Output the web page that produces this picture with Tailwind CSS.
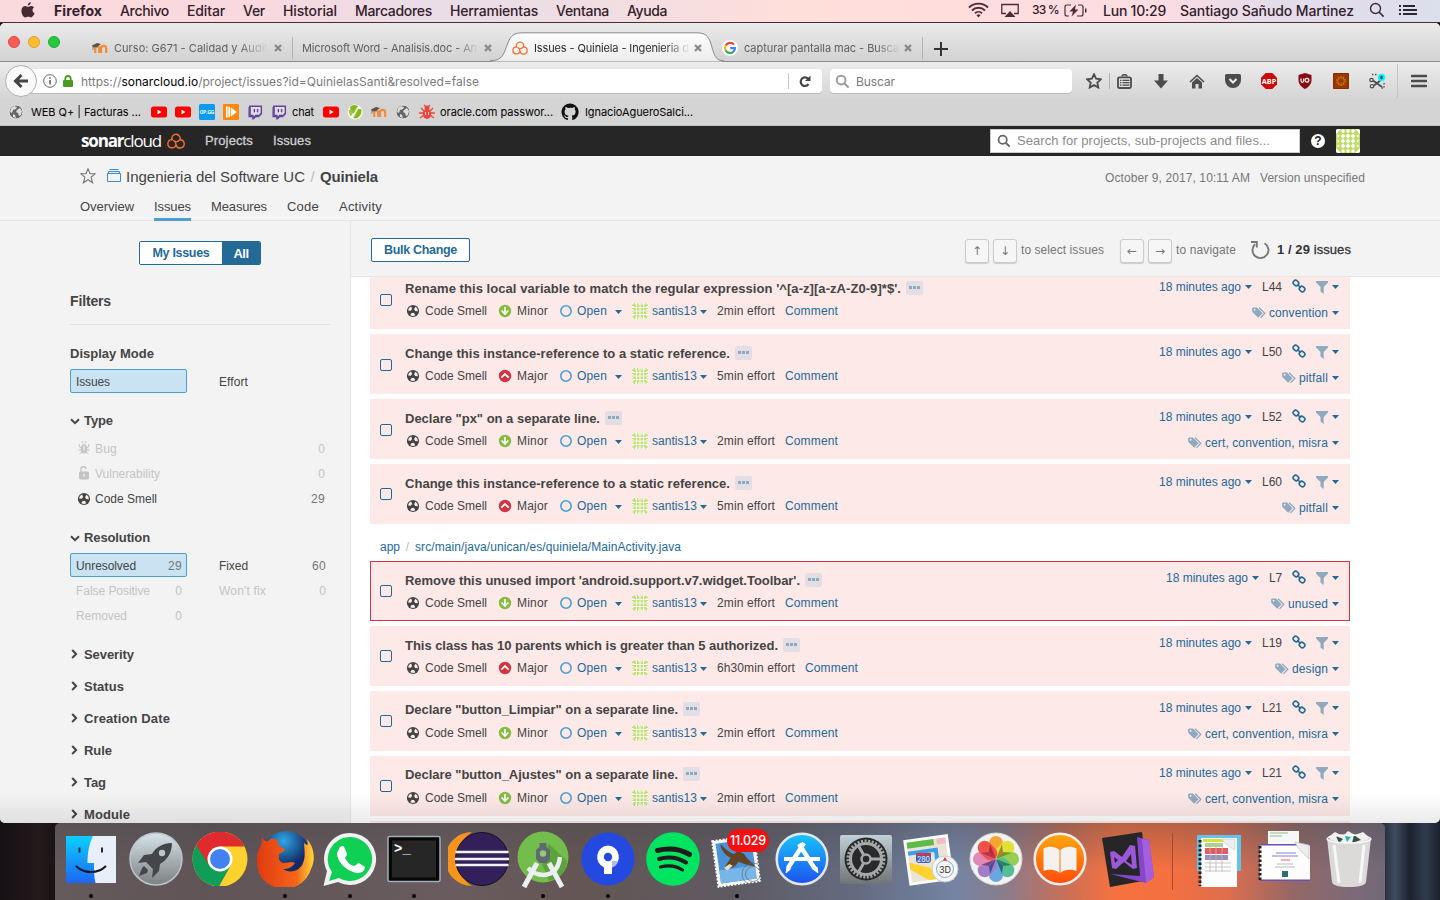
<!DOCTYPE html>
<html lang="es">
<head>
<meta charset="utf-8">
<title>Issues - Quiniela - Ingenieria del Software UC</title>
<script src="https://cdn.jsdelivr.net/npm/@tailwindcss/browser@4"></script>
</head>
<body class="bg-[#17151a]">
<svg width="0" height="0" class="absolute">
  <defs>
    <symbol id="close" viewBox="0 0 10 10"><path d="M2 2l6 6M8 2l-6 6" stroke="#8b8b8b" stroke-width="2.4"/></symbol>
    <symbol id="moodle" viewBox="0 0 16 12"><path d="M3.2 11V6.6a2 2 0 0 1 4 0V11M8.200 11V6.600a2.600 2.600 0 0 1 2-1.600M9 11V6.500a2.600 2.600 0 0 1 5.200 0V11" fill="none" stroke="#f08c3c" stroke-width="2.200"/><path d="M0 3.500L5 1l4 1-4 3-4 .4z" fill="#555"/><path d="M1 4v4" stroke="#777" stroke-width=".8"/></symbol>
    <symbol id="sonar" viewBox="0 0 18 16"><g fill="none" stroke-width="1.400" stroke-linecap="round"><path d="M5 6.700A4.200 4.200 0 1 1 13 6.800"/><path d="M5.200 6.600A4.100 4.100 0 1 0 9 11.600C8.900 9.500 8 8.200 6.700 7.600"/><path d="M9.200 12.200A4.100 4.100 0 1 0 13 6.800C11.300 8.700 9.800 9 8.300 8.500"/></g></symbol>
    <symbol id="yt" viewBox="0 0 16 12"><rect y=".5" width="16" height="11" rx="2.500" fill="#f00"/><path d="M6.500 3.500v5l4-2.500z" fill="#fff"/></symbol>
    <symbol id="twitch" viewBox="0 0 16 16"><path d="M1.500 1H15v9l-3.500 3.500H8.500L6 16H4.500v-2.500H.5V3.500z" fill="#6441a5"/><path d="M3 2.700h10.500V9l-2 2H8l-2 1.800V11H3z" fill="#ddd"/><path d="M6.800 4.700v3.500M10.200 4.700v3.500" stroke="#6441a5" stroke-width="1.500"/></symbol>
    <symbol id="globe" viewBox="0 0 16 16"><circle cx="8" cy="8" r="7" fill="#666" stroke="#e9e9e9" stroke-width="1"/><path d="M3 4l3-2 3 1-1 2-3 1-1 3-2-1zM9 6l3-2 2 3-1 4-2 1-1-3-2-1zM5 10l2 1 1 3-3-1z" fill="#ddd"/></symbol>
    <symbol id="mag" viewBox="0 0 16 16"><circle cx="6.500" cy="6.500" r="4.700" fill="none" stroke-width="2"/><path d="M10 10l4.500 4.500" stroke-width="2.200"/></symbol>
    <symbol id="smell" viewBox="0 0 14 14"><circle cx="7" cy="7" r="6.100" fill="#444"/><circle cx="7" cy="7" r="3.450" fill="none" stroke="#fdeeed" stroke-width="2.900" stroke-dasharray="3.613 3.613" transform="rotate(-60 7 7)"/></symbol>
    <symbol id="minor" viewBox="0 0 14 14"><circle cx="7" cy="7" r="6.200" fill="#85bb43"/><path d="M7 3v6.500M3.600 6.500L7 10l3.400-3.500" fill="none" stroke="#fff" stroke-width="1.700"/></symbol>
    <symbol id="major" viewBox="0 0 14 14"><circle cx="7" cy="7" r="6.200" fill="#d4333f"/><path d="M3.300 8.600L7 5l3.700 3.600" fill="none" stroke="#fff" stroke-width="1.800"/></symbol>
    <symbol id="avatar" viewBox="0 0 24 24"><path fill="#c0da66" d="M0 0h24v24H0z"/><g fill="#fff"><path d="M0 0h5L0 5zM24 0h-5l5 5zM0 24h5l-5-5zM24 24h-5l5-5z"/><circle cx="7" cy="2" r="1.700"/><circle cx="12" cy="2" r="1.700"/><circle cx="17" cy="2" r="1.700"/><circle cx="7" cy="22" r="1.700"/><circle cx="12" cy="22" r="1.700"/><circle cx="17" cy="22" r="1.700"/><path d="M1.500 5l2 2-2 2zM1.500 10l2 2-2 2zM1.500 15l2 2-2 2zM22.500 5l-2 2 2 2zM22.500 10l-2 2 2 2zM22.500 15l-2 2 2 2z"/><path d="M7 4.600l2.400 2.400L7 9.400 4.600 7zM12 4.600l2.400 2.400-2.400 2.400L9.600 7zM17 4.600l2.400 2.400-2.400 2.400L14.600 7zM7 9.600l2.400 2.400L7 14.400 4.600 12zM12 9.600l2.400 2.400-2.400 2.400L9.600 12zM17 9.600l2.400 2.400-2.400 2.400-2.400-2.400zM7 14.600l2.400 2.400L7 19.400 4.600 17zM12 14.600l2.400 2.400-2.400 2.400L9.600 17zM17 14.600l2.400 2.400-2.400 2.400-2.400-2.400z"/></g></symbol>
    <symbol id="avatar-sm" viewBox="0 0 16 16"><path fill="#c3dc74" d="M0 0h16v16H0z"/><path d="M0 .8h16M0 15.200h16M.8 0v16M15.200 0v16" stroke="#fff" stroke-width="1.300" stroke-dasharray="1.500 1.500"/><path d="M4.500 0v16M8 0v16M11.500 0v16M0 4.500h16M0 8h16M0 11.500h16" stroke="#fff" stroke-width="1.100" opacity=".9"/></symbol>
    <symbol id="caret" viewBox="0 0 7 4"><path d="M0 0h7L3.500 4z" fill="#236a97"/></symbol>
    <symbol id="link" viewBox="0 0 14 14"><g fill="none" stroke="#236a97" stroke-width="1.600"><rect x="1.100" y="1.600" width="5.600" height="4.800" rx="2.200" transform="rotate(42 4 4)"/><rect x="7.300" y="7.600" width="5.600" height="4.800" rx="2.200" transform="rotate(42 10 10)"/><path d="M5.300 5.300l3.400 3.400"/></g></symbol>
    <symbol id="filter" viewBox="0 0 12 13"><path d="M0 0h12v1.500L7.700 6v7L4.500 10.500V6L0 1.500z" fill="#8fa9bf"/></symbol>
    <symbol id="tags" viewBox="0 0 14 12"><path d="M0 1.500L1 .5h4l5.500 5.700-4.300 4.500L.3 5z" fill="#8fa9bf"/><path d="M7 .7l5.800 5.600-4.300 4.600" fill="none" stroke="#8fa9bf" stroke-width="1.300"/><circle cx="2.600" cy="2.800" r="1" fill="#fde9e8"/></symbol>
    <symbol id="down" viewBox="0 0 10 7"><path d="M1 1.200l4 3.900 4-3.900" fill="none" stroke="#444" stroke-width="2"/></symbol>
    <symbol id="right" viewBox="0 0 7 10"><path d="M1.200 1l3.900 4-3.900 4" fill="none" stroke="#444" stroke-width="2"/></symbol>
  </defs>
</svg>

<div class="w-[1440px] h-[900px] overflow-hidden flex flex-col font-['Liberation_Sans',Arial,sans-serif] text-[#444] whitespace-nowrap">

  <!-- System menu bar -->
  <header class="h-[23px] shrink-0 flex items-center pb-[1.500px] text-[14px] font-medium text-[#33202a] font-['Inter',sans-serif] border-b border-[#4b2c36] bg-[linear-gradient(90deg,#fbdadd_0,#f9d9de_240px,#eadde8_430px,#eedde4_560px,#ffdfda_800px,#ffdddd_960px,#fcdde3_1160px,#e6dcea_1260px,#dcdfed_1440px)]">
    <svg class="ml-[21px] mr-[19px]" width="14" height="16" viewBox="0 0 14 16"><path fill="#452a30" d="M9.800.3c.1 1.700-1.300 3.200-3 3.200C6.600 1.900 8.200.4 9.800.3zM7.100 4.700c.8 0 1.600-.8 3-.8 1.300 0 2.400.7 3 1.600-2.300 1.400-2 4.600.5 5.600-.6 1.700-2 4.300-3.500 4.300-1 0-1.600-.7-2.900-.7s-1.900.7-2.800.7C2.700 15.400.4 12 .4 8.900c0-3.300 2-5 3.900-5 1.200 0 2.100.8 2.800.8z"/></svg>
    <nav class="flex">
      <span class="w-[66px] font-bold"><i data-w="48">Firefox</i></span><span class="w-[67px]"><i data-w="49">Archivo</i></span><span class="w-[56px]"><i data-w="38">Editar</i></span><span class="w-[40px]"><i data-w="22">Ver</i></span><span class="w-[72px]"><i data-w="54">Historial</i></span><span class="w-[95px]"><i data-w="77">Marcadores</i></span><span class="w-[106px]"><i data-w="88">Herramientas</i></span><span class="w-[71px]"><i data-w="53">Ventana</i></span><span class="w-[341px]"><i data-w="40">Ayuda</i></span>
    </nav>
    <div class="flex items-center">
      <svg class="mr-[12px]" width="21" height="16" viewBox="0 0 21 16"><g fill="none" stroke="#4a2e33" stroke-width="1.900"><path d="M1 5.500a13.500 13.500 0 0 1 19 0M4 8.500a9.200 9.200 0 0 1 13 0M7 11.300a5 5 0 0 1 7 0"/></g><path d="M8.500 13.200a3 3 0 0 1 4 0L10.500 15.400z" fill="#4a2e33"/></svg>
      <svg class="mr-[13px]" width="18" height="15" viewBox="0 0 18 15"><path d="M5 10.500H.8V1.500h16.400v9H13" fill="none" stroke="#4a2e33" stroke-width="1.300"/><path d="M9 8l5.500 6h-11z" fill="#4a2e33"/></svg>
      <span class="w-[32px] text-[12px]"><i data-w="27">33 %</i></span>
      <svg class="mr-[16px]" width="23" height="13" viewBox="0 0 23 13"><path d="M7 1H3Q1 1 1 3v7q0 2 2 2h2M14 1h3q2 0 2 2v7q0 2-2 2h-4" fill="none" stroke="#4a2e33" stroke-width="1.200"/><path d="M12 .5L5.500 7.500H9L7.500 12.500 14.500 5.500H11z" fill="#4a2e33"/><path d="M21 4.500h1.500v4H21z" fill="#4a2e33"/></svg>
      <span class="w-[77px]"><i data-w="63">Lun 10:29</i></span>
      <span class="w-[189px]"><i data-w="174">Santiago Sañudo Martinez</i></span>
      <svg width="16" height="16" viewBox="0 0 16 16" class="mr-[14px]"><circle cx="6.500" cy="6.500" r="5" fill="none" stroke="#3a2c38" stroke-width="1.400"/><path d="M10 10l4.600 4.600" stroke="#3a2c38" stroke-width="1.700"/></svg>
      <svg width="19" height="12" viewBox="0 0 19 12"><path d="M0 2h2M4 2h12M0 6h2M4 6h14M0 10h2M4 10h14" stroke="#2d2633" stroke-width="1.800"/></svg>
    </div>
  </header>

  <!-- Browser window -->
  <div class="relative h-[800px] shrink-0 flex flex-col rounded-[5px] overflow-hidden bg-white">
    <div class="h-[39px] shrink-0 flex items-start bg-linear-to-b from-[#ebebeb] to-[#d2d2d2] border-b border-[#8c8a8c] text-[11px] text-[#5f5f5f] font-['Inter',sans-serif]">
      <div class="flex gap-[8px] pl-[8px] pt-[13px] w-[92px]">
        <b class="w-3 h-3 rounded-full bg-[#fc5b57] border border-[#df4744]"></b><b class="w-3 h-3 rounded-full bg-[#fdbc2f] border border-[#dfa023]"></b><b class="w-3 h-3 rounded-full bg-[#28c840] border border-[#1fab2e]"></b>
      </div>
      <div class="w-[201px] h-[22px] mt-[14px] flex items-center border-r border-[#b2b2b2]">
        <svg width="16" height="12" class="mr-[6px]"><use href="#moodle"/></svg>
        <span class="w-[156px] overflow-hidden mask-r-from-[125px] mask-r-to-[154px]"><i data-w="154">Curso: G671 - Calidad y Audit</i></span>
        <svg width="10" height="10" class="ml-[3px]"><use href="#close"/></svg>
      </div>
      <div class="w-[200px] h-[22px] mt-[14px] flex items-center pl-[9px]">
        <span class="w-[177px] overflow-hidden mask-r-from-[155px] mask-r-to-[177px]"><i data-w="175">Microsoft Word - Analisis.doc - An</i></span>
        <svg width="10" height="10" class="ml-[4px]"><use href="#close"/></svg>
      </div>
      <div class="w-[229px] h-[39px] relative">
        <svg class="absolute left-[-3px] top-[9px]" width="234" height="30" viewBox="0 0 234 30"><defs><linearGradient id="tg" x2="0" y2="1"><stop stop-color="#fdfdfd"/><stop offset="1" stop-color="#ececec"/></linearGradient></defs><path d="M0 29.500C13 29 14 21 17.500 12 20.500 3.500 24 .8 33 .8H206c9 0 12.500 2.700 15 11.200C224 22 225 29 234 29.500z" fill="url(#tg)"/><path d="M0 28.800C13 29 14 21 17.500 12 20.500 3.500 24 .8 33 .8H206c9 0 12.500 2.700 15 11.200C224 22 225 29 234 28.800" fill="none" stroke="#8c8a8c"/></svg>
        <div class="relative flex items-center h-[22px] mt-[14px] pl-[19px] text-[#2a2a2a]">
          <svg width="16" height="14" class="mr-[6px] stroke-[#f3702a]"><use href="#sonar"/></svg>
          <span class="w-[156px] overflow-hidden mask-r-from-[130px] mask-r-to-[156px]"><i data-w="155">Issues - Quiniela - Ingenieria d</i></span>
          <svg width="10" height="10" class="ml-[3px]"><use href="#close"/></svg>
        </div>
      </div>
      <div class="w-[201px] h-[22px] mt-[14px] flex items-center border-r border-[#b2b2b2]">
        <svg width="16" height="16" viewBox="0 0 16 16" class="mr-[6px]"><circle cx="8" cy="8" r="8" fill="#fff"/><g fill="none" stroke-width="2.200"><path d="M12 4.600A5 5 0 0 0 3.700 5.600" stroke="#ea4335"/><path d="M3.700 5.400a5 5 0 0 0 0 5" stroke="#fbbc05"/><path d="M3.600 10.200a5 5 0 0 0 7.800 1.500" stroke="#34a853"/><path d="M11.300 11.800A5 5 0 0 0 13 8.100H8.200" stroke="#4285f4"/></g></svg>
        <span class="w-[156px] overflow-hidden mask-r-from-[132px] mask-r-to-[156px]"><i data-w="155">capturar pantalla mac - Busca</i></span>
        <svg width="10" height="10" class="ml-[3px]"><use href="#close"/></svg>
      </div>
      <svg class="ml-[11px] mt-[19px]" width="14" height="14"><path d="M7 0v14M0 7h14" stroke="#333" stroke-width="2"/></svg>
    </div>

    <div class="h-[38px] shrink-0 flex items-center bg-linear-to-b from-[#ececec] to-[#d4d4d4] text-[12px] font-['Inter',sans-serif] text-[#7b7b7b]">
      <div class="w-[32px] h-[32px] ml-[5px] shrink-0 rounded-full border border-[#b0b0b0] bg-[#fafafa] flex items-center justify-center z-10"><svg width="16" height="16" viewBox="0 0 16 16"><path d="M15 8H4M8.500 2L2.500 8l6 6" fill="none" stroke="#444" stroke-width="3"/></svg></div>
      <div class="w-[801px] h-[24px] -ml-[16px] pl-[22px] bg-white rounded-r-[4px] shadow-[0_1px_0_#bdbdbd] flex items-center">
        <svg width="14" height="14" viewBox="0 0 14 14" class="mr-[6px]"><circle cx="7" cy="7" r="6.300" fill="none" stroke="#666"/><path d="M7 6v4.500M7 3.300v1.500" stroke="#555" stroke-width="1.500"/></svg>
        <svg width="10" height="12" viewBox="0 0 10 12" class="mr-[8px]"><path d="M2.300 6V3.700a2.700 2.700 0 0 1 5.400 0V6" fill="none" stroke="#4a9b20" stroke-width="1.800"/><rect y="5" width="10" height="7" rx="1" fill="#4a9b20"/></svg>
        <span class="w-[707px] pt-[2px]"><i data-w="398">https://<b class="font-normal text-black">sonarcloud.io</b>/project/issues?id=QuinielasSanti&amp;resolved=false</i></span>
        <span class="h-4 border-l border-[#c8c8c8] mr-[10px]"></span>
        <svg width="12" height="13" viewBox="0 0 12 13"><path d="M9.500 9.200A4.300 4.300 0 1 1 9 3.600" fill="none" stroke="#444" stroke-width="2.200"/><path d="M11.500.5v5.500H6z" fill="#444"/></svg>
      </div>
      <div class="w-[242px] h-[24px] ml-[8px] mr-[14px] pl-[5px] bg-white rounded-[4px] shadow-[0_1px_0_#bdbdbd] flex items-center">
        <svg width="15" height="15" viewBox="0 0 16 16" class="mr-[6px] stroke-[#9a9a9a] fill-none"><use href="#mag"/></svg><span class="pt-[2px]"><i data-w="39">Buscar</i></span>
      </div>
      <div class="flex items-center h-full">
        <svg width="16" height="16" viewBox="0 0 16 16" class="mr-[7px]"><path d="M8 1.200l2.100 4.500 4.800.6-3.600 3.300 1 4.900L8 12.100l-4.300 2.400 1-4.900L1.100 6.300l4.800-.6z" fill="none" stroke="#4c4c4c" stroke-width="1.800"/></svg>
        <span class="h-4 border-l border-[#b2b2b2] mr-[7px]"></span>
        <svg width="15" height="15" viewBox="0 0 15 15" class="mr-[21px]"><path d="M5 2.500Q5 .7 7.500.7T10 2.500" fill="none" stroke="#4c4c4c" stroke-width="1.500"/><rect x="1" y="3.300" width="13" height="10.700" rx="1.500" fill="none" stroke="#4c4c4c" stroke-width="1.800"/><path d="M3 6.300h1.500M5.500 6.300h7M3 8.700h1.500M5.500 8.700h7M3 11.100h1.500M5.500 11.100h7" stroke="#4c4c4c" stroke-width="1.200"/></svg>
        <svg width="16" height="15" viewBox="0 0 16 15" class="mr-[20px]"><path d="M5.500 0h5v6.500H15L8 14.500 1 6.500h4.500z" fill="#4c4c4c"/></svg>
        <svg width="16" height="15" viewBox="0 0 16 15" class="mr-[20px]"><path d="M1 8l7-6.500L15 8" fill="none" stroke="#4c4c4c" stroke-width="1.600"/><path d="M3 8.500L8 4l5 4.500V14.500H9.500V10h-3v4.500H3z" fill="#4c4c4c"/></svg>
        <svg width="16" height="14" viewBox="0 0 16 14" class="mr-[20px]"><path d="M1.500 0h13Q16 0 16 1.500V6a8 8 0 0 1-16 0V1.500Q0 0 1.500 0z" fill="#4c4c4c"/><path d="M4.500 5L8 8.500 11.500 5" fill="none" stroke="#eee" stroke-width="2"/></svg>
        <svg width="16" height="16" viewBox="0 0 16 16" class="mr-[20px]"><path d="M4.700 0h6.600L16 4.700v6.600L11.300 16H4.700L0 11.300V4.700z" fill="#cc0a0a"/><text x="8" y="10.700" text-anchor="middle" font-size="7.300" font-weight="bold" font-family="Open Sans" fill="#fff">ABP</text></svg>
        <svg width="16" height="16" viewBox="0 0 16 16" class="mr-[20px]"><path d="M8 0l6.500 2v5c0 4-2.500 7-6.500 9-4-2-6.500-5-6.500-9V2z" fill="#8b0a10"/><path d="M4 5.500v2.300q0 1.500 1.300 1.500T6.700 7.800V5.500" fill="none" stroke="#fff" stroke-width="1.200"/><circle cx="10" cy="7.300" r="1.900" fill="none" stroke="#fff" stroke-width="1.200"/></svg>
        <svg width="16" height="16" viewBox="0 0 16 16" class="mr-[20px]"><path d="M.5.500h15v15H.5z" fill="#9a3600" stroke="#832c00"/><circle cx="8" cy="8" r="4.300" fill="none" stroke="#c98318" stroke-width="1.200" stroke-dasharray="1.500 1.200"/><circle cx="8" cy="8" r="3.200" fill="none" stroke="#c98318" stroke-width=".8"/></svg>
        <svg width="17" height="16" viewBox="0 0 17 16" class="mr-[11px]"><path d="M3 1.500h6M15 10v5H11" fill="none" stroke="#4c4c4c" stroke-width="1.300" stroke-dasharray="1.500 1.500"/><path d="M4 7.500l9 6.500M5 12.500l7-5.500" stroke="#4c4c4c" stroke-width="1.700"/><circle cx="2.500" cy="7" r="1.700" fill="none" stroke="#4c4c4c" stroke-width="1.200"/><circle cx="3" cy="13.200" r="1.700" fill="none" stroke="#4c4c4c" stroke-width="1.200"/><circle cx="12.500" cy="4.500" r="3.700" fill="#0ff"/><path d="M12.500 2.500v4M10.800 3.500l3.400 2M14.200 3.500l-3.400 2" stroke="#156" stroke-width="1"/></svg>
        <span class="h-[34px] border-l border-[#c4c4c4] mr-[13px]"></span>
        <svg width="16" height="14" viewBox="0 0 16 14"><path d="M1 2h14M1 7h14M1 12h14" stroke="#4c4c4c" stroke-width="2.600" stroke-linecap="round"/></svg>
      </div>
    </div>

    <div class="h-[26px] shrink-0 pl-[8px] flex items-center bg-[#d4d4d4] border-b border-[#bcc3c3] text-[11px] text-black font-['Inter',sans-serif]">
      <svg width="16" height="16" class="mr-[7px] -mt-[2px]"><use href="#globe"/></svg><span class="w-[120px] -mt-px"><i data-w="110">WEB Q+ | Facturas ...</i></span>
      <svg width="16" height="12" class="mr-[8px] -mt-[2px]"><use href="#yt"/></svg>
      <svg width="16" height="12" class="mr-[8px] -mt-[2px]"><use href="#yt"/></svg>
      <svg width="16" height="16" viewBox="0 0 16 16" class="mr-[8px] -mt-[2px]"><rect width="16" height="16" rx="1.500" fill="#0a9bf0"/><text x="8" y="10" text-anchor="middle" font-size="4.600" font-weight="bold" font-family="Inter" fill="#fff">OP.GG</text></svg>
      <svg width="16" height="16" viewBox="0 0 16 16" class="mr-[9px] -mt-[2px]"><rect width="16" height="16" rx="1" fill="#f98a0b"/><path d="M3 2.500v11h1.600v-11zM5.400 2.700v10.600l1.700-.6V3.300zM7.900 3.600v8.800l6-4.400z" fill="#fff"/></svg>
      <svg width="15" height="16" class="mr-[9px] -mt-[2px]"><use href="#twitch"/></svg>
      <svg width="15" height="16" class="mr-[5px] -mt-[2px]"><use href="#twitch"/></svg><span class="w-[31px] -mt-px"><i data-w="22">chat</i></span>
      <svg width="16" height="12" class="mr-[8px] -mt-[2px]"><use href="#yt"/></svg>
      <svg width="16" height="16" viewBox="0 0 16 16" class="mr-[8px] -mt-[2px]"><circle cx="8" cy="8" r="7.500" fill="#fff"/><path d="M3 3a7 7 0 0 1 8-1L8 7l-1 2-3 .500zM11 5l3 0a7 7 0 0 1-6 9.500L6 14l2-3z" fill="#85b917"/><path d="M1.500 6L3 12l2-1 1-5z" fill="#9ac832"/></svg>
      <svg width="16" height="12" class="mr-[8px] -mt-[2px]"><use href="#moodle"/></svg>
      <svg width="16" height="16" class="mr-[8px] -mt-[2px]"><use href="#globe"/></svg>
      <svg width="16" height="16" viewBox="0 0 16 16" class="mr-[5px] -mt-[2px]"><g stroke="#f0433a" stroke-width="1.300" fill="none"><path d="M0 9h16M2 4l3 3M14 4l-3 3M1 14l4-3M15 14l-4-3M5 1l2 2M11 1L9 3"/></g><ellipse cx="8" cy="10" rx="4.200" ry="5" fill="#f0433a"/><circle cx="8" cy="4" r="2.500" fill="#f0433a"/><path d="M6.500 8v3M9.500 8v3" stroke="#d4d4d4"/></svg><span class="w-[121px] -mt-px"><i data-w="113">oracle.com passwor...</i></span>
      <svg width="18" height="18" viewBox="0 0 16 16" class="mr-[6px] -mt-[2px]"><path fill="#111" d="M8 0.400a7.600 7.600 0 0 0-2.400 14.800c.4.100.5-.2.500-.4v-1.400c-2.100.5-2.600-.9-2.600-.9-.3-.9-.8-1.100-.8-1.100-.7-.5.100-.5.100-.5.800.1 1.200.8 1.200.8.700 1.200 1.800.8 2.200.6.100-.5.300-.8.500-1-1.700-.2-3.500-.8-3.500-3.700 0-.8.300-1.500.8-2-.1-.200-.4-1 .1-2 0 0 .6-.2 2.100.8a7 7 0 0 1 3.800 0c1.500-1 2.100-.8 2.100-.8.400 1 .2 1.800.1 2 .5.500.8 1.200.8 2 0 2.900-1.800 3.500-3.500 3.700.3.200.5.700.5 1.400v2.100c0 .2.100.5.500.4A7.600 7.600 0 0 0 8 .4z"/></svg><span class="-mt-px"><i data-w="108">IgnacioAgueroSalci...</i></span>
    </div>

    <!-- SonarCloud -->
    <div class="h-[30px] shrink-0 pl-[81px] flex items-center bg-[#262626] text-[13px] text-[#cfcfcf]">
      <span class="w-[86px] text-[17px] leading-none text-white font-['Open_Sans',sans-serif] -mt-[2px]"><i data-w="80"><b class="font-bold">sonar</b>cloud</i></span>
      <svg width="18" height="16" class="mr-[20px] stroke-[#f3702a]"><use href="#sonar"/></svg>
      <span class="w-[68px] [-webkit-text-stroke:0.3px]"><i data-w="48">Projects</i></span><span class="w-[717px] [-webkit-text-stroke:0.3px]"><i data-w="38">Issues</i></span>
      <div class="w-[310px] h-[24px] bg-white border border-[#cdcdcd] pl-[6px] flex items-center text-[#8b8b8b]"><svg width="14" height="14" viewBox="0 0 16 16" class="mr-[6px] stroke-[#666] fill-none"><use href="#mag"/></svg><i data-w="253">Search for projects, sub-projects and files...</i></div>
      <span class="ml-[11px] mr-[11px] w-[14px] h-[14px] rounded-full bg-white text-[#222] text-[12px] leading-[14px] font-bold text-center">?</span>
      <svg width="24" height="24" class="rounded-[2px]"><use href="#avatar"/></svg>
    </div>

    <div class="h-[65px] shrink-0 pl-[80px] bg-[#f3f3f3] border-b border-[#e6e6e6]">
      <div class="h-[34px] pt-[9px] flex items-center text-[15px]">
        <svg width="16" height="16" viewBox="0 0 16 16" class="mr-[11px] -mt-[4px]"><path d="M8 .8l2 5h5.200L11 9.300l1.600 5.500L8 11.700l-4.600 3.100L5 9.300.8 5.800H6z" fill="none" stroke="#777" stroke-width="1.100"/></svg>
        <svg width="14" height="13" viewBox="0 0 14 13" class="mr-[5px] -mt-[4px]"><path d="M.5 4.500h13v8H.5zM1.500 4.500v-2h11v2M2.500.5h9" fill="none" stroke="#3a8dc4"/></svg>
        <i data-w="179">Ingenieria del Software UC</i><span class="w-[15px] text-center text-[#bbb]">/</span><span class="w-[785px]"><i class="font-bold" data-w="58">Quiniela</i></span>
        <span class="w-[155px] text-[12px] text-[#777]"><i data-w="145">October 9, 2017, 10:11 AM</i></span><i class="text-[12px] text-[#777]" data-w="105">Version unspecified</i>
      </div>
      <nav class="flex h-[31px] text-[13px] leading-[34px]">
        <span class="w-[74px]"><i data-w="54">Overview</i></span><span class="w-[37px] mr-[20px] border-b-[3px] border-[#4b9fd5]"><i data-w="37">Issues</i></span><span class="w-[76px]"><i data-w="56">Measures</i></span><span class="w-[52px]"><i data-w="32">Code</i></span><i data-w="43">Activity</i>
      </nav>
    </div>

    <div class="flex-1 min-h-0 flex text-[13px]">
      <aside class="w-[351px] shrink-0 bg-[#f3f3f3] border-r border-[#e6e6e6] pl-[70px] pr-[20px] pt-[20px]">
        <div class="ml-[69px] w-[122px] h-[24px] flex border border-[#236a97] rounded-[2px] overflow-hidden font-bold text-[#236a97] leading-[23px]"><span class="w-[82px] text-center bg-white text-[12.500px]"><i data-w="57">My Issues</i></span><span class="flex-1 text-center bg-[#236a97] text-white"><i data-w="15">All</i></span></div>
        <div class="h-[60px] pt-[12px] border-b border-[#e0e0e0] text-[14px] font-bold leading-[48px]"><i data-w="41">Filters</i></div>
        <div class="mt-[16px] h-[26px] leading-[26px] font-bold"><i data-w="84">Display Mode</i></div>
        <div class="mt-[2px] h-[25px] flex leading-[27px] text-[12px]"><span class="w-[117px] h-[24px] pl-[5px] bg-[#cae3f2] border border-[#4b9fd5] rounded-[2px] leading-[25px] mr-[32px]"><i data-w="34">Issues</i></span><i data-w="29">Effort</i></div>
        <div class="mt-[14px] h-[26px] flex items-center font-bold"><svg width="10" height="7" class="mr-[4px]"><use href="#down"/></svg><i data-w="29">Type</i></div>
        <ul class="mt-[2px] pl-[7px] pr-[5px] leading-[23px] text-[12px] text-[#c4c4c4]">
          <li class="flex items-center h-[25px] pt-[2px]"><svg width="14" height="14" viewBox="0 0 14 14" class="mr-[4px] -mt-[4px]"><ellipse cx="7" cy="8" rx="3.200" ry="4.700" fill="#c4c4c4"/><path d="M7 4.500v8" stroke="#f3f3f3" stroke-width="1.200" stroke-dasharray="5 2"/><path d="M2 5.500L4.500 7M12 5.500L9.500 7M1.500 9H4M12.500 9H10M2.500 13L5 11M11.500 13L9 11M5 0l1 2.500M9 0L8 2.500M2.300 3v2.500M11.700 3v2.500" stroke="#c4c4c4"/></svg><span class="flex-1"><i data-w="22">Bug</i></span>0</li>
          <li class="flex items-center h-[25px] pt-[2px]"><svg width="14" height="14" viewBox="0 0 14 14" class="mr-[4px] -mt-[4px]"><rect x="2" y="5.500" width="10" height="8" rx="1.500" fill="#c4c4c4"/><path d="M4 6V3.500A2.500 2.500 0 0 1 9 3" fill="none" stroke="#c4c4c4" stroke-width="1.300"/><path d="M7 7.500l1 1.500-1 3-1-3z" fill="#f3f3f3"/></svg><span class="flex-1"><i data-w="65">Vulnerability</i></span>0</li>
          <li class="flex items-center h-[25px] pt-[2px] text-[#444]"><svg width="14" height="14" class="mr-[4px] -mt-[2px]"><use href="#smell"/></svg><span class="flex-1"><i data-w="62">Code Smell</i></span><span class="text-[#777]"><i data-w="14">29</i></span></li>
        </ul>
        <div class="mt-[14px] h-[26px] flex items-center font-bold"><svg width="10" height="7" class="mr-[4px]"><use href="#down"/></svg><i data-w="66">Resolution</i></div>
        <div class="mt-[2px] w-[256px] grid grid-cols-[117px_107px] auto-rows-[25px] gap-x-[32px] leading-[27px] text-[12px] text-[#c4c4c4]">
          <div class="h-[24px] flex justify-between pl-[5px] pr-[4px] leading-[25px] bg-[#cae3f2] border border-[#4b9fd5] rounded-[2px] text-[#444]"><i data-w="60">Unresolved</i><span class="text-[#777]"><i data-w="14">29</i></span></div>
          <div class="flex justify-between text-[#444]"><i data-w="29">Fixed</i><span class="text-[#777]"><i data-w="14">60</i></span></div>
          <div class="flex justify-between pl-[6px] pr-[5px]"><i data-w="74">False Positive</i><span>0</span></div>
          <div class="flex justify-between"><i data-w="47">Won't fix</i><span>0</span></div>
          <div class="flex justify-between pl-[6px] pr-[5px]"><i data-w="51">Removed</i><span>0</span></div>
        </div>
        <div class="mt-[11px] font-bold leading-[32px]">
          <div class="flex items-center"><svg width="7" height="10" class="ml-[1px] mr-[6px] -mt-[2px]"><use href="#right"/></svg><i data-w="50">Severity</i></div>
          <div class="flex items-center"><svg width="7" height="10" class="ml-[1px] mr-[6px] -mt-[2px]"><use href="#right"/></svg><i data-w="40">Status</i></div>
          <div class="flex items-center"><svg width="7" height="10" class="ml-[1px] mr-[6px] -mt-[2px]"><use href="#right"/></svg><i data-w="86">Creation Date</i></div>
          <div class="flex items-center"><svg width="7" height="10" class="ml-[1px] mr-[6px] -mt-[2px]"><use href="#right"/></svg><i data-w="28">Rule</i></div>
          <div class="flex items-center"><svg width="7" height="10" class="ml-[1px] mr-[6px] -mt-[2px]"><use href="#right"/></svg><i data-w="22">Tag</i></div>
          <div class="flex items-center"><svg width="7" height="10" class="ml-[1px] mr-[6px] -mt-[2px]"><use href="#right"/></svg><i data-w="46">Module</i></div>
        </div>
      </aside>

      <main class="flex-1 min-w-0 flex flex-col">
        <div class="h-[56px] shrink-0 bg-[#f3f3f3] border-b border-[#e6e6e6] flex items-center pl-[20px] pt-[3px] text-[#777]">
          <button class="w-[99px] h-[24px] mr-[495px] bg-white border border-[#236a97] rounded-[2px] font-bold text-[12.500px] text-[#236a97] leading-[22px]"><i data-w="73">Bulk Change</i></button>
          <kbd class="w-[24px] h-[24px] mt-[2px] mr-[4px] rounded-[3px] border border-[#ccc] bg-[#f6f6f6] shadow-[0_1px_1px_#ccc] text-center leading-[22px] font-['DejaVu_Sans',sans-serif] text-[12px]">↑</kbd><kbd class="w-[24px] h-[24px] mt-[2px] mr-[4px] rounded-[3px] border border-[#ccc] bg-[#f6f6f6] shadow-[0_1px_1px_#ccc] text-center leading-[22px] font-['DejaVu_Sans',sans-serif] text-[12px]">↓</kbd>
          <span class="w-[99px] text-[12px]"><i data-w="83">to select issues</i></span>
          <kbd class="w-[24px] h-[24px] mt-[2px] mr-[4px] rounded-[3px] border border-[#ccc] bg-[#f6f6f6] shadow-[0_1px_1px_#ccc] text-center leading-[22px] font-['DejaVu_Sans',sans-serif] text-[12px]">←</kbd><kbd class="w-[24px] h-[24px] mt-[2px] mr-[4px] rounded-[3px] border border-[#ccc] bg-[#f6f6f6] shadow-[0_1px_1px_#ccc] text-center leading-[22px] font-['DejaVu_Sans',sans-serif] text-[12px]">→</kbd>
          <span class="w-[74px] text-[12px]"><i data-w="60">to navigate</i></span>
          <svg width="20" height="20" viewBox="0 0 20 20" class="mr-[7px] -mt-px"><path d="M14.500 3.200A8 8 0 1 1 5 4.200M1 2h5.800v5.500" fill="none" stroke="#777" stroke-width="1.900"/></svg>
          <span class="text-[#333]"><i data-w="74"><b>1 / 29</b> <span class="[-webkit-text-stroke:0.3px]">issues</span></i></span>
        </div>
        <div id="issues" class="flex-1 min-h-0 overflow-hidden pl-[19px] flex flex-col gap-[5px] text-[#444]"></div>
      </main>
    </div>
    <div class="absolute inset-x-0 bottom-0 h-[30px] bg-linear-to-b from-black/0 to-black/8"></div>
  </div>

  <!-- Dock -->
  <div class="h-[77px] shrink-0 pl-[55px] bg-[linear-gradient(90deg,#151114_0,#231a1b_40px,#151114_60px,#1d2533_1380px,#3e4b5e_1395px,#1b2230_1410px,#303b4e_1425px,#1c2330_1440px)]">
    <div class="w-[1330px] h-full rounded-t-[5px] pl-[4px] flex bg-[linear-gradient(180deg,rgba(70,70,75,0.35),rgba(70,70,75,0)_60%),linear-gradient(90deg,#655a5c_0,#605457_150px,#6a5c5e_400px,#645654_520px,#5f5a62_680px,#646b80_800px,#7484a3_900px,#8a7c8c_950px,#c96f58_1010px,#f57240_1060px,#f57040_1110px,#e06e4c_1170px,#936867_1240px,#7c6a78_1300px,#736878_1330px)]">
      <div class="w-[64.6px] pt-[9px] flex flex-col items-center"><svg width="54" height="54" viewBox="0 0 54 54"><defs><linearGradient id="fb" x2="0" y2="1"><stop stop-color="#0cd0ff"/><stop offset="1" stop-color="#1d66f2"/></linearGradient></defs><path d="M2 4h50v47H2z" fill="#e9eff8"/><path d="M2 4h27c-4 8-5.500 17-5.500 27H30c0 7 0 14 1.500 20H2z" fill="url(#fb)"/><path d="M15.500 15.500v5M38 15.500v5" stroke="#1a2a44" stroke-width="2"/><path d="M12 34c8 8 22 8 30 0" fill="none" stroke="#101828" stroke-width="2"/></svg><b class="mt-[8px] w-1 h-1 rounded-full bg-black"></b></div>
      <div class="w-[64.6px] pt-[9px] flex flex-col items-center"><svg width="54" height="54" viewBox="0 0 54 54"><defs><linearGradient id="lp" x2="0" y2="1"><stop stop-color="#d6e4ea"/><stop offset="1" stop-color="#7d7f80"/></linearGradient></defs><circle cx="27" cy="27" r="26" fill="url(#lp)" stroke="#b9c6cc" stroke-width="1.500"/><path d="M43 11c-9 0-16 4-20 11l-8 1-6 8 8-1 7 7-1 9 7-7 1-7c7-4 12-11 12-21zM13 36l-3 8 8-3 1-3-4-4z" fill="#43464a"/><circle cx="33" cy="21" r="3.200" fill="#b9c6cc"/></svg></div>
      <div class="w-[64.6px] pt-[9px] flex flex-col items-center"><svg width="56" height="54" viewBox="0 0 56 54"><circle cx="28" cy="27" r="27.500" fill="#fdd22d"/><path d="M28 27L4.200 13.200A27.500 27.500 0 0 0 27 54.500L39 33z" fill="#0f9d58"/><path d="M4.200 13.200A27.500 27.500 0 0 1 52.500 14.500H28L17 33z" fill="#df2a2e"/><circle cx="28" cy="27" r="12.500" fill="#fff"/><circle cx="28" cy="27" r="10" fill="#4281f0"/></svg></div>
      <div class="w-[64.6px] pt-[8px] flex flex-col items-center"><svg width="58" height="56" viewBox="0 0 58 56"><defs><radialGradient id="fx" cx=".45" cy=".2"><stop stop-color="#2fa7e4"/><stop offset="1" stop-color="#122a66"/></radialGradient><linearGradient id="fo"><stop stop-color="#e03a10"/><stop offset=".7" stop-color="#f4661a"/><stop offset="1" stop-color="#ffd83a"/></linearGradient></defs><circle cx="30" cy="25" r="25" fill="url(#fx)"/><path d="M6 6c1 3 3 5 6 4 3-3 6-3 9-1l3 7 5 2c-1 3-4 4-6 5 0 5-1 5 2 8 3 2 7 0 11 0l3 1c-3 5-8 6-12 6 7 5 17 2 20-6 3-6 1-16 1-20 5 4 4 1 3-4 7 8 9 20 4 30A28 28 0 0 1 3 42C-1 30 1 20 5 15z" fill="url(#fo)"/></svg><b class="mt-[7px] w-1 h-1 rounded-full bg-black"></b></div>
      <div class="w-[64.6px] pt-[9px] flex flex-col items-center"><svg width="54" height="54" viewBox="0 0 54 54"><path d="M27 1a26 26 0 1 1-12 49L.5 54 4 39A26 26 0 0 1 27 1z" fill="#f1f3f2"/><path d="M27 5a22 22 0 1 1-11 41l-10 3 3-9A22 22 0 0 1 27 5z" fill="#0fcf55"/><path d="M17 15c3-2 4-1 5 2l2 5c0 2-2 3-2 4 2 4 5 7 9 8 2 0 3-3 5-3l6 4c0 3-3 6-7 6-11-1-21-11-21-20z" fill="#fff"/></svg><b class="mt-[8px] w-1 h-1 rounded-full bg-black"></b></div>
      <div class="w-[64.6px] pt-[9px] flex flex-col items-center"><svg width="54" height="54" viewBox="0 0 54 54"><rect x="1" y="4.500" width="52" height="45" rx="1.500" fill="#070707" stroke="#9fb1b8" stroke-width="1.500"/><rect x="5" y="8.500" width="44" height="37" fill="#262626"/><text x="7" y="21" font-family="Liberation Mono" font-weight="bold" font-size="14" fill="#fff">&gt;_</text></svg><b class="mt-[8px] w-1 h-1 rounded-full bg-black"></b></div>
      <div class="w-[64.6px] pt-[9px] flex flex-col items-center"><svg width="62" height="54" viewBox="0 0 62 54"><path d="M24 0a27 27 0 0 0 0 54A32 32 0 0 1 24 0z" fill="#f7941e"/><circle cx="34" cy="27" r="26.500" fill="#33205b" stroke="#17111f"/><path d="M7.500 20h53M7 27h54M7.500 33h53" stroke="#f3f1f8" stroke-width="2.700"/></svg></div>
      <div class="w-[64.6px] pt-[8px] flex flex-col items-center"><svg width="54" height="58" viewBox="0 0 54 58"><circle cx="27" cy="26" r="25.500" fill="#72bd4b"/><path d="M33 13l18 17q-2 16-18 20l-8-20z" fill="#5aa43b"/><path d="M21 32L8 56M33 32l13 24" stroke="#eceff1" stroke-width="5"/><path d="M12 37q6 7 16 7 14-1 16-18" fill="none" stroke="#eceff1" stroke-width="4.500"/><path d="M23.500 12h7v4l3.500 3v9l-3.500 4h-7L20 28v-9l3.500-3z" fill="#606a6e"/><circle cx="27" cy="22.500" r="3.200" fill="#92c97a"/></svg><b class="mt-[5px] w-1 h-1 rounded-full bg-black"></b></div>
      <div class="w-[64.6px] pt-[9px] flex flex-col items-center"><svg width="54" height="54" viewBox="0 0 54 54"><circle cx="27" cy="27" r="26.500" fill="#2449e0"/><path d="M27 13.500A11.500 11.500 0 0 0 23 35.500V42h8v-6.500A11.500 11.500 0 0 0 27 13.500z" fill="#fff"/><circle cx="27" cy="25" r="4.200" fill="#2449e0"/><path d="M31 29l6.500 0q-2 5-6.500 6.500z" fill="#a9bdf7"/></svg><b class="mt-[8px] w-1 h-1 rounded-full bg-black"></b></div>
      <div class="w-[64.6px] pt-[9px] flex flex-col items-center"><svg width="54" height="54" viewBox="0 0 54 54"><circle cx="27" cy="27" r="26.800" fill="#00e461"/><g fill="none" stroke="#1c1c1c" stroke-linecap="round"><path d="M11.500 18.500c12-3 22-2 32 4" stroke-width="5"/><path d="M13 27c10-3 19-1.500 27 3.500" stroke-width="4"/><path d="M14.500 35c8-2 16-1 22 3" stroke-width="3.300"/></g></svg></div>
      <div class="w-[64.6px] pt-[9px] flex flex-col items-center relative"><svg width="56" height="56" viewBox="0 0 56 56"><g transform="rotate(-8 28 28)"><path d="M6 6h42v46H6z" fill="#f6f6f4" stroke="#fff" stroke-width="2" stroke-dasharray="2 1.500"/><path d="M9 9h36v40H9z" fill="#4a93d8"/><path d="M9 36h36v13H9z" fill="#79b6e8"/><path d="M14 10c3 5 8 10 12 12l4-3 6 4c2 6 7 9 9 14l-8-3-8-4c-4 6-10 6-15 5l3-4 5-6c-6-4-9-10-8-15z" fill="#634525"/><path d="M14 34l6-3 3 2-6 4z" fill="#e8dcc8"/></g><circle cx="44" cy="42" r="11" fill="none" stroke="#50606f" opacity=".6"/><circle cx="44" cy="42" r="7.500" fill="none" stroke="#50606f" opacity=".6"/></svg><b class="mt-[6px] w-1 h-1 rounded-full bg-black"></b><span class="absolute left-[22px] top-[6px] w-[42px] h-[23px] rounded-full bg-[#f50f10] text-white text-[12.5px] leading-[23px] font-medium text-center font-['Inter',sans-serif]"><i data-w="36">11.029</i></span></div>
      <div class="w-[64.6px] pt-[9px] flex flex-col items-center"><svg width="54" height="54" viewBox="0 0 54 54"><defs><linearGradient id="as" x2="0" y2="1"><stop stop-color="#18c5fb"/><stop offset="1" stop-color="#1d50f0"/></linearGradient></defs><circle cx="27" cy="27" r="25.300" fill="url(#as)" stroke="#e4e7ee" stroke-width="2.500"/><path d="M9 27h36" stroke="#fff" stroke-width="4"/><path d="M29 11L13 36M24 12l16 25" stroke="#fff" stroke-width="4.500"/><path d="M12 35l3.500 2L11 41zM38 37l4-2 1 6z" fill="#fff" stroke="#fff"/></svg></div>
      <div class="w-[64.6px] pt-[9px] flex flex-col items-center"><svg width="54" height="54" viewBox="0 0 54 54"><defs><linearGradient id="sp" x2="0" y2="1"><stop stop-color="#c1d0d6"/><stop offset="1" stop-color="#6f7478"/></linearGradient></defs><rect x="1" y="3" width="52" height="49" rx="2" fill="url(#sp)"/><circle cx="27" cy="27" r="21.500" fill="#28292b"/><circle cx="27" cy="27" r="17.500" fill="none" stroke="#a5a7a9" stroke-width="4" stroke-dasharray="2 1.500"/><circle cx="27" cy="27" r="15.500" fill="none" stroke="#a5a7a9" stroke-width="3"/><circle cx="27" cy="27" r="4.500" fill="none" stroke="#a5a7a9" stroke-width="2.500"/><path d="M31 27h12M25 30.500l-6 10.500M25 23.500L19 13" stroke="#a5a7a9" stroke-width="3"/></svg></div>
      <div class="w-[64.6px] pt-[9px] flex flex-col items-center"><svg width="58" height="54" viewBox="0 0 58 54"><g transform="rotate(-8 26 27)"><path d="M4 5h45v46H4z" fill="#fbfbf8"/><path d="M7 8h39v40H7z" fill="#e9e4d4"/><path d="M7 8h27v6H7z" fill="#5dbb4a"/><path d="M37 8h9v6h-9z" fill="#f5b8c4"/><path d="M7 19h28v29" fill="none" stroke="#3b9eec" stroke-width="4"/><path d="M7 28l20 8 8 12H24L7 35z" fill="#fdd12e"/></g><rect x="14" y="21" width="15" height="10" rx="3" fill="#3b62b8"/><path d="M14 21h15v2.500H14z" fill="#d8373b"/><text x="21.500" y="30" text-anchor="middle" font-family="Inter" font-size="7" fill="#fff">280</text><circle cx="43" cy="37" r="13" fill="#f4f6f8" stroke="#c9cdd2"/><circle cx="43" cy="37" r="8.500" fill="none" stroke="#8dadc0"/><path d="M43 25l2 3.500h-4z" fill="#e22"/><text x="43" y="40.500" text-anchor="middle" font-family="Inter" font-size="9" fill="#333">3D</text></svg></div>
      <div class="w-[64.6px] pt-[9px] flex flex-col items-center"><svg width="54" height="54" viewBox="0 0 54 54"><circle cx="27" cy="27" r="26" fill="#f3f3f3" stroke="#d5d5d5"/><g opacity=".9" transform="translate(27 27)"><rect x="-7" y="-23" width="14" height="22" rx="7" fill="#f99d1c"/><rect x="-7" y="-23" width="14" height="22" rx="7" fill="#dfe020" transform="rotate(45)"/><rect x="-7" y="-23" width="14" height="22" rx="7" fill="#8fcb3f" transform="rotate(90)"/><rect x="-7" y="-23" width="14" height="22" rx="7" fill="#45b98a" transform="rotate(135)"/><rect x="-7" y="-23" width="14" height="22" rx="7" fill="#5b9fe0" transform="rotate(180)"/><rect x="-7" y="-23" width="14" height="22" rx="7" fill="#9a72c4" transform="rotate(225)"/><rect x="-7" y="-23" width="14" height="22" rx="7" fill="#df7fae" transform="rotate(270)"/><rect x="-7" y="-23" width="14" height="22" rx="7" fill="#f0413a" transform="rotate(315)"/><path d="M0 0L-7-7-6-15z" fill="#b3121c"/><path d="M0 0l6-15 1 8z" fill="#a8741a"/><path d="M0 0l7-7 8 1z" fill="#5d8c16"/><path d="M0 0l15 6-8 1z" fill="#157a3c"/><path d="M0 0l7 7-1 8z" fill="#145c6e"/><path d="M0 0l-6 15-1-8z" fill="#2f3f94"/><path d="M0 0l-7 7-8-1z" fill="#6d2f7c"/><path d="M0 0l-15-6 8-1z" fill="#a8204c"/></g></svg></div>
      <div class="w-[64.6px] pt-[9px] flex flex-col items-center"><svg width="54" height="54" viewBox="0 0 54 54"><defs><linearGradient id="ib" x2="0" y2="1"><stop stop-color="#ffa90a"/><stop offset="1" stop-color="#ff4a0a"/></linearGradient></defs><circle cx="27" cy="27" r="25.300" fill="url(#ib)" stroke="#f0eeec" stroke-width="2.500"/><path d="M26.500 18C22 14 15 14 10.500 16.500V39c5-2 12-2 16 2zM27.500 18C32 14 39 14 43.500 16.500V39c-5-2-12-2-16 2z" fill="#f4f1ee"/></svg></div>
      <div class="w-[64.6px] pt-[8px] pl-[4px] flex flex-col items-center"><svg width="56" height="56" viewBox="0 0 56 56"><path d="M3 7L43 1l6 48-38 7z" fill="#262528"/><path d="M38 6l12 3 5 37-8 6-36-9 30 2z" fill="#8746c9"/><path d="M50 9l5 37-8 6-4-44z" fill="#a45ee0"/><path d="M11 21l4-1 8 6 8-12 5 1 2 22-4 1-9-7-8 7-4-1zm4 5l1 6 3-3zm17-3l-5 7 6 4z" fill="#9b58d8" fill-rule="evenodd"/></svg></div>
      <div class="w-[30px] pt-[10px] flex justify-center"><span class="h-[57px] border-l border-[#a5482c]"></span></div>
      <div class="w-[64.6px] pt-[9px] flex flex-col items-center"><svg width="50" height="56" viewBox="0 0 50 56"><path d="M3 3h44v36H3z" fill="#62c4ea"/><path d="M7 6h36v49H7z" fill="#fdfdfd"/><path d="M9 7h28v3H9z" fill="#d9e23c"/><path d="M11 11h18v4H11z" fill="#a9d58d"/><path d="M11 16h23v6H11z" fill="#e25b5f"/><path d="M11 23h23v5H11z" fill="#9c8fb8"/><path d="M11 31h26M11 35h26M11 39h26M16 11v29M22 11v29M28 11v29" stroke="#bbb" stroke-width=".8"/><path d="M28 7q3 6 13 11V7z" fill="#eee" stroke="#ccc" stroke-width=".6"/><path d="M6 8v46" stroke="#222" stroke-width="3" stroke-dasharray="2.500 2"/></svg></div>
      <div class="w-[64.6px] pt-[7px] flex flex-col items-center"><svg width="54" height="54" viewBox="0 0 54 54"><path d="M11 1h31v16H11z" fill="#f6f8f6"/><path d="M13 3h18M13 6h12" stroke="#9bb59b"/><path d="M3 14h50v37H3z" fill="#fdfdfd"/><path d="M3 14h50v1.500H3zM3 49.500h50V51H3z" fill="#6a50b5"/><path d="M19 23h20M15 26h26" stroke="#8a80cc"/><path d="M24 30h9" stroke="#e66"/><path d="M20 34h16M18 37h20" stroke="#aaa" stroke-width=".8"/><path d="M25 41h6v6h-6z" fill="#2a6e72"/><path d="M38 12q2 6 14 17V15z" fill="#eee" stroke="#bbb" stroke-width=".6"/><path d="M3 16v35" stroke="#222" stroke-width="3" stroke-dasharray="2.500 2"/></svg></div>
      <div class="w-[64.6px] pt-[7px] flex flex-col items-center"><svg width="46" height="58" viewBox="0 0 46 58"><path d="M2 7l7-5 8 4 5-5 7 4 8-3 7 6-6 5H8z" fill="#efefef"/><path d="M10 6l7 3-4 4zM28 5l7 5-9 3z" fill="#395048"/><path d="M19 6l6 1-4 5z" fill="#2cb3b0"/><path d="M1 8q22 10 44 0l-5 44q-1 5-17 5T6 52z" fill="#dcdad8"/><path d="M8 15l5 38M38 15l-4 38" stroke="#f7f7f7" stroke-width="3"/><ellipse cx="23" cy="9" rx="22" ry="4" fill="none" stroke="#fafafa" stroke-width="1.300"/></svg></div>
    </div>
  </div>
</div>

<script>
const issues = [
  {t:"Rename this local variable to match the regular expression '^[a-z][a-zA-Z0-9]*$'.", w:496, sev:'minor', e:'2min effort', line:'L44', tag:'convention', tw:59, first:1},
  {t:'Change this instance-reference to a static reference.', w:325, sev:'major', e:'5min effort', line:'L50', tag:'pitfall', tw:29},
  {t:'Declare "px" on a separate line.', w:195, sev:'minor', e:'2min effort', line:'L52', tag:'cert, convention, misra', tw:123},
  {t:'Change this instance-reference to a static reference.', w:325, sev:'major', e:'5min effort', line:'L60', tag:'pitfall', tw:29, box:1},
  {path:1},
  {t:"Remove this unused import 'android.support.v7.widget.Toolbar'.", w:395, sev:'minor', e:'2min effort', line:'L7', tag:'unused', tw:40, sel:1, box:1, side:1},
  {t:'This class has 10 parents which is greater than 5 authorized.', w:373, sev:'major', e:'6h30min effort', line:'L19', tag:'design', tw:36, box:1, side:1},
  {t:'Declare "button_Limpiar" on a separate line.', w:273, sev:'minor', e:'2min effort', line:'L21', tag:'cert, convention, misra', tw:123, up:1, box:1},
  {t:'Declare "button_Ajustes" on a separate line.', w:273, sev:'minor', e:'2min effort', line:'L21', tag:'cert, convention, misra', tw:123, up:1, box:1},
  {blank:1}
];
const caret = '<svg width="7" height="4" class="shrink-0"><use href="#caret"/></svg>';
document.getElementById('issues').innerHTML = issues.map(i => {
  if (i.path) return '<div class="h-[27px] shrink-0 pl-[10px] leading-[36px] text-[12px] text-[#236a97]"><i data-w="20">app</i><span class="inline-block w-[15px] text-center text-[#bbb]">/</span><i data-w="266">src/main/java/unican/es/quiniela/MainActivity.java</i></div>';
  if (i.blank) return '<div class="h-[60px] w-[980px] shrink-0 bg-[#fde9e8]"></div>';
  const big = i.e.length > 12;
  return `<div class="${i.first ? '-mt-[8px]' : ''} h-[60px] w-[980px] shrink-0 bg-[#fde9e8] flex border ${i.sel ? 'border-[#d4333f]' : 'border-transparent'} ${i.up ? 'pb-px' : 'pt-px'}">
    <div class="w-[34px] pl-[9px] ${i.box && !i.up ? 'pt-[22px]' : 'pt-[23px]'}"><span class="block w-[12px] h-[12px] border border-[#236a97] rounded-[2px]"></span></div>
    <div class="flex-1 pt-[8px]">
      <div class="h-[20px] flex items-center font-bold"><i data-w="${i.w}">${i.t}</i><span class="ml-[5px] -mt-[3px] w-[17px] h-[14px] rounded-[2px] bg-[#e3dde6] flex items-center justify-center gap-[1px]"><b class="w-[3px] h-[3px] bg-[#8fa9bf]"></b><b class="w-[3px] h-[3px] bg-[#8fa9bf]"></b><b class="w-[3px] h-[3px] bg-[#8fa9bf]"></b></span></div>
      <div class="h-[24px] ${i.up ? 'mt-px' : ''} flex items-center text-[12px] text-[#236a97]">
        <svg width="14" height="14" class="ml-[1px] mr-[5px]"><use href="#smell"/></svg><span class="w-[73px] text-[#444]"><i data-w="62">Code Smell</i></span>
        <svg width="14" height="14" class="mr-[5px]"><use href="${i.sev === 'minor' ? '#minor' : '#major'}"/></svg><span class="w-[43px] text-[#444]"><i data-w="31">${i.sev === 'minor' ? 'Minor' : 'Major'}</i></span>
        <svg width="12" height="12" class="mr-[5px]"><circle cx="6" cy="6" r="5.200" fill="none" stroke="#4b9fd5" stroke-width="1.600"/></svg><span class="w-[38px]"><i data-w="30">Open</i></span><span class="flex mt-[2px]">${caret}</span>
        <svg width="16" height="16" class="ml-[10px] mr-[4px]"><use href="#avatar-sm"/></svg><span class="w-[48px]"><i data-w="45">santis13</i></span><span class="flex mt-[2px]">${caret}</span>
        <span class="${big ? 'w-[88px]' : 'w-[68px]'} ml-[10px] text-[#444]"><i data-w="${big ? 78 : 58}">${i.e}</i></span><i data-w="53">Comment</i>
      </div>
    </div>
    <div class="w-[200px] pr-[10px] ${i.side ? 'pt-[5px]' : 'pt-[6px]'} text-[12px] text-[#236a97]">
      <div class="h-[20px] flex items-center justify-end"><i data-w="82">18 minutes ago</i><span class="ml-[4px] mr-[10px] flex">${caret}</span><span class="text-[#444] mr-[10px]"><i data-w="${i.line === 'L7' ? 13 : 20}">${i.line}</i></span><svg width="14" height="14" class="mr-[10px] -mt-[3px]"><use href="#link"/></svg><svg width="12" height="13" class="mr-[4px]"><use href="#filter"/></svg>${caret}</div>
      <div class="h-[20px] mt-[6px] flex items-center justify-end"><svg width="14" height="12" class="mr-[3px]"><use href="#tags"/></svg><i data-w="${i.tw}">${i.tag}</i><span class="ml-[4px] flex -mt-px">${caret}</span></div>
    </div>
  </div>`;
}).join('');

// Labels carry their width in pixels; spread the letters to fill it.
// Refit whenever a label's own size changes (stylesheet or fonts arriving late).
const labels = [...document.querySelectorAll('[data-w]')];
labels.forEach(el => el.classList.add('not-italic', 'inline-block', 'whitespace-pre'));
function fit(el) {
  const gap = +el.dataset.w - el.getBoundingClientRect().width;
  if (Math.abs(gap) < 0.2) return;
  const now = parseFloat(el.style.letterSpacing) || 0;
  el.style.letterSpacing = (now + gap / el.textContent.length).toFixed(3) + 'px';
}
const fitAll = () => labels.forEach(fit);
fitAll();
const watcher = new ResizeObserver(entries => entries.forEach(e => fit(e.target)));
labels.forEach(el => watcher.observe(el));
addEventListener('load', fitAll);
document.fonts.ready.then(fitAll);
[30, 100, 250, 500].forEach(ms => setTimeout(fitAll, ms));
</script>
</body>
</html>
